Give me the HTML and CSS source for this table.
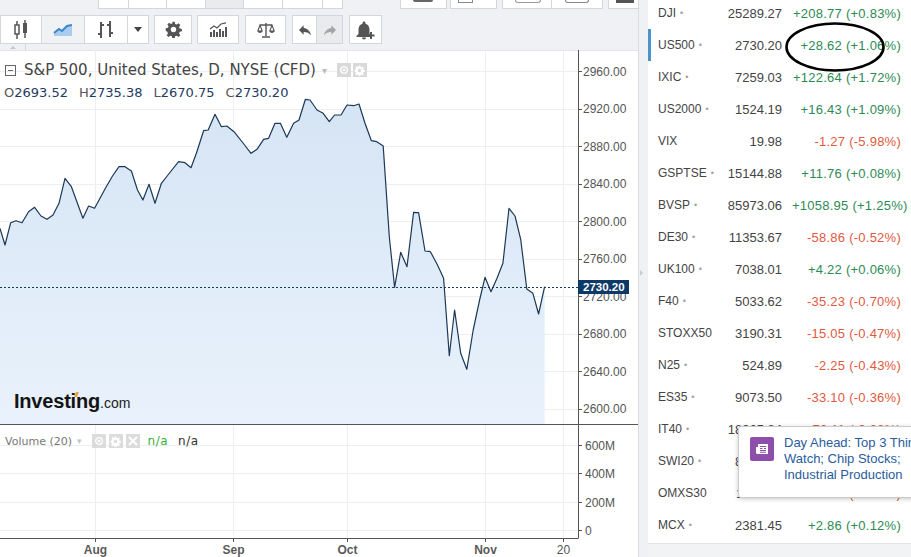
FILE: index.html
```html
<!DOCTYPE html>
<html>
<head>
<meta charset="utf-8">
<title>S&amp;P 500 chart</title>
<link rel="stylesheet" href="styles.css">
</head>
<body>
<div class="app">
  <div class="main">
    <div class="topbar">
      <span class="tb first" style="width:31px"></span>
      <span class="tb" style="width:38px"></span>
      <span class="tb" style="width:39px"></span>
      <span class="tb grey" style="width:38px"></span>
      <span class="tb" style="width:39px"></span>
      <span class="tb" style="width:40px"></span>
      <span class="tb" style="width:20px"></span>
      <span class="tgap" style="width:57px"></span>
      <span class="tb first" style="width:47px"><i class="peek p1"></i></span>
      <span class="tgap" style="width:3px"></span>
      <span class="tb first" style="width:47px"><i class="peek p2"></i></span>
      <span class="tgap" style="width:5px"></span>
      <span class="tb first" style="width:50px"><i class="peek p3"></i></span>
      <span class="tb" style="width:51px"><i class="peek p4"></i></span>
      <span class="tgap" style="width:5px"></span>
      <span class="tb first" style="width:32px"><i class="peek p5"></i></span>
    </div>
    <div class="toolbar">
      <div class="group">
        <span class="btn w42">
          <svg width="14" height="20" viewBox="0 0 14 20"><path d="M3 1v18M11 0v18" stroke="#555" stroke-width="1.5"/><rect x="1" y="5" width="4" height="9" fill="#fff" stroke="#555" stroke-width="1.5"/><rect x="9" y="3" width="4" height="10" fill="#555"/></svg>
        </span>
        <span class="btn w43 sel">
          <svg width="20" height="14" viewBox="0 0 20 14"><path d="M1 10 L6 6 L9 8 L14 3 L19 2 V13 H1Z" fill="#a9cdee"/><path d="M1 10 L6 6 L9 8 L14 3 L19 2" fill="none" stroke="#3b86cc" stroke-width="2"/></svg>
        </span>
        <span class="btn w43">
          <svg width="18" height="20" viewBox="0 0 18 20"><path d="M4 2v16M1 14h3M4 5h3M13 1v16M10 5h3M13 13h3" stroke="#555" stroke-width="2" fill="none"/></svg>
        </span>
        <span class="btn w21">
          <svg width="8" height="5" viewBox="0 0 8 5"><path d="M0 0h8L4 5Z" fill="#444"/></svg>
        </span>
      </div>
      <div class="group">
        <span class="btn w38">
          <svg width="17" height="17" viewBox="0 0 24 24"><path fill="#555" fill-rule="evenodd" d="M10.3 1h3.4l.6 3.1 2.3 1 2.6-1.8 2.4 2.4-1.8 2.6 1 2.3 3.1.6v3.4l-3.1.6-1 2.3 1.8 2.6-2.4 2.4-2.6-1.8-2.3 1-.6 3.1h-3.4l-.6-3.1-2.3-1-2.6 1.8-2.4-2.4 1.8-2.6-1-2.3L1 13.7v-3.4l3.1-.6 1-2.3-1.8-2.6 2.4-2.4 2.6 1.8 2.3-1zM12 8.2a3.8 3.8 0 1 0 0 7.6 3.8 3.8 0 0 0 0-7.6z"/></svg>
        </span>
      </div>
      <div class="group">
        <span class="btn w42">
          <svg width="18" height="15" viewBox="0 0 18 15"><path d="M1 7 L5 4 L8 6 L12 2 L17 0.8" fill="none" stroke="#555" stroke-width="1.2"/><path d="M2 10v5M5 8v7M8 10v5M11 7v8M14 9v6M17 5v10" stroke="#555" stroke-width="2"/></svg>
        </span>
      </div>
      <div class="group">
        <span class="btn w41">
          <svg width="18" height="16" viewBox="0 0 18 16"><path d="M9 1v13M3 3h12M5 15h8" stroke="#555" stroke-width="1.4"/><path d="M3 3 L0.8 9 H5.2Z M15 3 L12.8 9 H17.2Z" fill="none" stroke="#555" stroke-width="1.1"/><path d="M0.8 9 a2.2 2 0 0 0 4.4 0Z M12.8 9 a2.2 2 0 0 0 4.4 0Z" fill="#555"/></svg>
        </span>
      </div>
      <div class="group">
        <span class="btn w25">
          <svg width="16" height="16" viewBox="0 0 24 24"><path fill="#555" d="M10 9V5l-7 7 7 7v-4.1c5 0 8.5 1.6 11 5.1-1-5-4-10-11-11z"/></svg>
        </span>
        <span class="btn w26 grey">
          <svg width="16" height="16" viewBox="0 0 24 24"><path fill="#a3a5a8" d="M14 9V5l7 7-7 7v-4.1c-5 0-8.5 1.6-11 5.1 1-5 4-10 11-11z"/></svg>
        </span>
      </div>
      <div class="group">
        <span class="btn w33">
          <svg width="19" height="20" viewBox="0 0 19 20"><path fill="#555" d="M8 19.5c1.1 0 2-.9 2-2H6c0 1.1.9 2 2 2zm5.5-5.5v-4.5c0-2.8-1.5-5.1-4-5.8V3c0-.8-.7-1.5-1.5-1.5S6.5 2.2 6.5 3v.7C4 4.4 2.5 6.7 2.5 9.5V14l-2 2v1h15v-1z"/><path d="M15 12v7M11.5 15.5h7" stroke="#555" stroke-width="2"/></svg>
        </span>
      </div>
    </div>
    <div class="strip"><span class="up-arrow"></span><span class="strip-line"></span></div>
    <div class="chart">
      <svg class="plot" width="638" height="507" viewBox="0 50 638 507">
        <defs>
          <linearGradient id="fillg" x1="0" y1="95" x2="0" y2="424" gradientUnits="userSpaceOnUse">
            <stop offset="0" stop-color="#d5e4f4"/>
            <stop offset="1" stop-color="#e9f2fc"/>
          </linearGradient>
        </defs>
        <g stroke="#eceef1" stroke-width="1">
          <path d="M0 71.5H578M0 109.5H578M0 146.5H578M0 184.5H578M0 221.5H578M0 259.5H578M0 296.5H578M0 334.5H578M0 371.5H578M0 409.5H578"/>
          <path d="M0 445.5H578M0 473.5H578M0 502.5H578M0 530.5H578"/>
          <path d="M95.5 50V538M233.5 50V538M347.5 50V538M485.5 50V538M563.5 50V538"/>
        </g>
        <polygon fill="url(#fillg)" points="0,228.3 5,245 10.7,222.7 16,220.7 22,222.7 28.6,211.7 34.6,207.3 41,216 47,219.3 53,215 59,203.3 65,178.3 71.4,186.7 82.9,218.3 88.6,206 94.6,208.3 105.4,188.3 112.5,176 119,166.7 125,166.7 131.4,171 137.5,190 142.9,200 149,184.3 155,203.3 161.4,183.3 167.9,175 178.6,161.7 185,162.7 191,167.7 196.4,153.3 203.6,130.7 208.2,130 215,114.3 221.4,126.7 226.8,126 234,131.7 244.6,145 251,153.3 257,149.3 263.6,139.3 268.6,138.3 275,123.3 280.4,123.3 286.8,137.3 293.6,123.3 299,120 305.4,99.3 310,100 317,110 323.2,113.3 329.3,121.7 334.6,115 341,115 347,105 353.6,105.7 359,104 365,123.3 371.4,140.7 376.8,141.7 383.2,146 389.3,236.7 394.6,287.3 400.7,252.3 407,266.7 413.6,212.3 418.6,212.7 425,251 430.4,251.7 437.5,265 443.6,278.3 449.3,355.7 454.6,310 460.7,353.3 466.8,369.3 473.2,330 479.6,300 485,277.3 491,291.7 497,278.3 502.9,263.3 509,208.3 515,216 520.7,239.3 526.8,289 532.9,293.3 538.6,314 544.6,286.7 544.6,424 0,424"/>
        <polyline fill="none" stroke="#1c3857" stroke-width="1.2" stroke-linejoin="round" points="0,228.3 5,245 10.7,222.7 16,220.7 22,222.7 28.6,211.7 34.6,207.3 41,216 47,219.3 53,215 59,203.3 65,178.3 71.4,186.7 82.9,218.3 88.6,206 94.6,208.3 105.4,188.3 112.5,176 119,166.7 125,166.7 131.4,171 137.5,190 142.9,200 149,184.3 155,203.3 161.4,183.3 167.9,175 178.6,161.7 185,162.7 191,167.7 196.4,153.3 203.6,130.7 208.2,130 215,114.3 221.4,126.7 226.8,126 234,131.7 244.6,145 251,153.3 257,149.3 263.6,139.3 268.6,138.3 275,123.3 280.4,123.3 286.8,137.3 293.6,123.3 299,120 305.4,99.3 310,100 317,110 323.2,113.3 329.3,121.7 334.6,115 341,115 347,105 353.6,105.7 359,104 365,123.3 371.4,140.7 376.8,141.7 383.2,146 389.3,236.7 394.6,287.3 400.7,252.3 407,266.7 413.6,212.3 418.6,212.7 425,251 430.4,251.7 437.5,265 443.6,278.3 449.3,355.7 454.6,310 460.7,353.3 466.8,369.3 473.2,330 479.6,300 485,277.3 491,291.7 497,278.3 502.9,263.3 509,208.3 515,216 520.7,239.3 526.8,289 532.9,293.3 538.6,314 544.6,286.7"/>
        <path d="M0 287.5H578" stroke="#1c3857" stroke-width="1" stroke-dasharray="2 2"/>
        <g stroke="#555" stroke-width="1" fill="none">
          <path d="M578.5 50V538M0 424.5H638M0 538.5H578.5"/>
          <path d="M578 71.5h4M578 109.5h4M578 146.5h4M578 184.5h4M578 221.5h4M578 259.5h4M578 296.5h4M578 334.5h4M578 371.5h4M578 409.5h4"/>
          <path d="M578 445.5h4M578 473.5h4M578 502.5h4M578 530.5h4"/>
          <path d="M95.5 538v4M233.5 538v4M347.5 538v4M485.5 538v4M563.5 538v4"/>
        </g>
        <g class="ax">
          <text x="583" y="71.7">2960.00</text>
          <text x="583" y="109.2">2920.00</text>
          <text x="583" y="146.7">2880.00</text>
          <text x="583" y="184.2">2840.00</text>
          <text x="583" y="221.7">2800.00</text>
          <text x="583" y="259.2">2760.00</text>
          <text x="583" y="296.7">2720.00</text>
          <text x="583" y="334.2">2680.00</text>
          <text x="583" y="371.7">2640.00</text>
          <text x="583" y="409.2">2600.00</text>
          <text x="585" y="445.7">600M</text>
          <text x="585" y="474">400M</text>
          <text x="585" y="502.7">200M</text>
          <text x="585" y="531">0</text>
        </g>
        <g class="ax mid">
          <text class="b" x="95.5" y="549.5">Aug</text>
          <text class="b" x="233.5" y="549.5">Sep</text>
          <text class="b" x="347.5" y="549.5">Oct</text>
          <text class="b" x="485.5" y="549.5">Nov</text>
          <text x="563.5" y="549.5">20</text>
        </g>
        <rect x="578" y="280" width="51" height="14" fill="#0c3966"/>
        <text class="lastp" x="583" y="287.3">2730.20</text>
      </svg>

      <div class="head">
        <div class="title-row">
          <span class="collapse"></span>
          <span class="title">S&amp;P 500, United States, D, NYSE (CFD)</span>
          <span class="caret">▾</span>
          <span class="ibox first"><svg width="10" height="10" viewBox="0 0 10 10"><circle cx="5" cy="5" r="3.3" fill="none" stroke="#fff" stroke-width="1.3"/><circle cx="5" cy="5" r="1.3" fill="#fff"/></svg></span>
          <span class="ibox"><svg width="11" height="11" viewBox="0 0 24 24"><path fill="#fff" fill-rule="evenodd" d="M10.3 1h3.4l.6 3.1 2.3 1 2.6-1.8 2.4 2.4-1.8 2.6 1 2.3 3.1.6v3.4l-3.1.6-1 2.3 1.8 2.6-2.4 2.4-2.6-1.8-2.3 1-.6 3.1h-3.4l-.6-3.1-2.3-1-2.6 1.8-2.4-2.4 1.8-2.6-1-2.3L1 13.7v-3.4l3.1-.6 1-2.3-1.8-2.6 2.4-2.4 2.6 1.8 2.3-1zM12 8.2a3.8 3.8 0 1 0 0 7.6 3.8 3.8 0 0 0 0-7.6z"/></svg></span>
        </div>
        <div class="ohlc">
          <span class="q"><b>O</b>2693.52</span>
          <span class="q"><b>H</b>2735.38</span>
          <span class="q"><b>L</b>2670.75</span>
          <span class="q"><b>C</b>2730.20</span>
        </div>
      </div>

      <div class="logo">Investing<span class="com">.com</span><i class="spark"></i></div>

      <div class="vol-head">
        <span class="vname">Volume (20)</span>
        <span class="vcaret">▾</span>
        <span class="ibox light first"><svg width="10" height="10" viewBox="0 0 10 10"><circle cx="5" cy="5" r="3.3" fill="none" stroke="#fff" stroke-width="1.3"/><circle cx="5" cy="5" r="1.3" fill="#fff"/></svg></span>
        <span class="ibox light"><svg width="11" height="11" viewBox="0 0 24 24"><path fill="#fff" fill-rule="evenodd" d="M10.3 1h3.4l.6 3.1 2.3 1 2.6-1.8 2.4 2.4-1.8 2.6 1 2.3 3.1.6v3.4l-3.1.6-1 2.3 1.8 2.6-2.4 2.4-2.6-1.8-2.3 1-.6 3.1h-3.4l-.6-3.1-2.3-1-2.6 1.8-2.4-2.4 1.8-2.6-1-2.3L1 13.7v-3.4l3.1-.6 1-2.3-1.8-2.6 2.4-2.4 2.6 1.8 2.3-1zM12 8.2a3.8 3.8 0 1 0 0 7.6 3.8 3.8 0 0 0 0-7.6z"/></svg></span>
        <span class="ibox light"><svg width="10" height="10" viewBox="0 0 10 10"><path d="M1 1L9 9M9 1L1 9" stroke="#fff" stroke-width="1.8"/></svg></span>
        <span class="na green">n/a</span>
        <span class="na">n/a</span>
      </div>
    </div>
  </div>

  <div class="divider"><span class="handle"></span></div>

  <div class="panel">
    <div class="list">
      <div class="row"><span class="nm">DJI<i class="dot">•</i></span><span class="pr">25289.27</span><span class="ch up">+208.77 (+0.83%)</span></div>
      <div class="row active"><span class="nm">US500<i class="dot">•</i></span><span class="pr">2730.20</span><span class="ch up">+28.62 (+1.06%)</span></div>
      <div class="row"><span class="nm">IXIC<i class="dot">•</i></span><span class="pr">7259.03</span><span class="ch up">+122.64 (+1.72%)</span></div>
      <div class="row"><span class="nm">US2000<i class="dot">•</i></span><span class="pr">1524.19</span><span class="ch up">+16.43 (+1.09%)</span></div>
      <div class="row"><span class="nm">VIX</span><span class="pr">19.98</span><span class="ch down">-1.27 (-5.98%)</span></div>
      <div class="row"><span class="nm">GSPTSE<i class="dot">•</i></span><span class="pr">15144.88</span><span class="ch up">+11.76 (+0.08%)</span></div>
      <div class="row"><span class="nm">BVSP<i class="dot">•</i></span><span class="pr">85973.06</span><span class="ch up">+1058.95 (+1.25%)</span></div>
      <div class="row"><span class="nm">DE30<i class="dot">•</i></span><span class="pr">11353.67</span><span class="ch down">-58.86 (-0.52%)</span></div>
      <div class="row"><span class="nm">UK100<i class="dot">•</i></span><span class="pr">7038.01</span><span class="ch up">+4.22 (+0.06%)</span></div>
      <div class="row"><span class="nm">F40<i class="dot">•</i></span><span class="pr">5033.62</span><span class="ch down">-35.23 (-0.70%)</span></div>
      <div class="row"><span class="nm">STOXX50</span><span class="pr">3190.31</span><span class="ch down">-15.05 (-0.47%)</span></div>
      <div class="row"><span class="nm">N25<i class="dot">•</i></span><span class="pr">524.89</span><span class="ch down">-2.25 (-0.43%)</span></div>
      <div class="row"><span class="nm">ES35<i class="dot">•</i></span><span class="pr">9073.50</span><span class="ch down">-33.10 (-0.36%)</span></div>
      <div class="row"><span class="nm">IT40<i class="dot">•</i></span><span class="pr">18965.84</span><span class="ch down">-73.11 (-0.38%)</span></div>
      <div class="row"><span class="nm">SWI20<i class="dot">•</i></span><span class="pr">8851.42</span><span class="ch down">-18.32 (-0.21%)</span></div>
      <div class="row"><span class="nm">OMXS30</span><span class="pr">1511.09</span><span class="ch down">-2.74 (-0.18%)</span></div>
      <div class="row"><span class="nm">MCX<i class="dot">•</i></span><span class="pr">2381.45</span><span class="ch up">+2.86 (+0.12%)</span></div>
    </div>
    <div class="panel-foot"></div>
  </div>
</div>

<div class="popup">
  <span class="news-ico"><svg width="24" height="24" viewBox="0 0 24 24"><rect width="24" height="24" rx="2" fill="#8e4fab"/><path d="M8 7h10v10H7.5A1.5 1.5 0 0 1 6 15.5V10h2z" fill="#fff"/><path d="M10 9.5h6M10 11.5h2.5M14 11.5h2M10 13.5h6M10 15.2h6" stroke="#8e4fab" stroke-width="1.1"/></svg></span>
  <span class="ptext">Day Ahead: Top 3 Things to<br>Watch; Chip Stocks;<br>Industrial Production</span>
</div>

<svg class="ellipse" width="102" height="52" viewBox="0 0 102 52"><ellipse cx="51" cy="26" rx="48.5" ry="23.5" fill="none" stroke="#000" stroke-width="2.6"/></svg>
</body>
</html>
```

FILE: styles.css
```css
* { box-sizing: border-box; margin: 0; padding: 0; }
html, body { width: 911px; height: 557px; overflow: hidden; }
body {
  background: #eff1f4;
  font-family: "Liberation Sans", Arial, sans-serif;
  color: #444;
  position: relative;
}
.app { display: flex; height: 557px; }
.main { width: 638px; flex: none; display: flex; flex-direction: column; }

/* cut-off top toolbar row */
.topbar { display: flex; height: 9px; padding-left: 98px; }
.tb {
  height: 9px; flex: none; background: #fff;
  border-right: 1px solid #d3d6da; border-bottom: 1px solid #d3d6da;
  position: relative; overflow: hidden;
}
.tb.first { border-left: 1px solid #d3d6da; }
.tb.grey { background: #eaebed; }
.tgap { flex: none; }
.peek { position: absolute; display: block; background: #666; }
.peek.p1 { left: 12px; top: 0; width: 20px; height: 2px; border-radius: 0 0 3px 3px; }
.peek.p2 { left: 7px; top: 0; width: 15px; height: 3px; background: none; border: 1px solid #888; border-top: none; }
.peek.p3 { left: 12px; top: 0; width: 26px; height: 3px; background: none; border: 1px solid #999; border-top: none; border-radius: 0 0 8px 8px; }
.peek.p4 { left: 13px; top: 0; width: 24px; height: 3px; background: none; border: 1px solid #888; border-top: none; border-radius: 0 0 4px 4px; }
.peek.p5 { left: 7px; top: 0; width: 18px; height: 3px; background: #555; }

/* main toolbar */
.toolbar { display: flex; gap: 5px; height: 29px; margin-top: 6px; }
.group { display: flex; }
.group:nth-child(4), .group:nth-child(5), .group:nth-child(6) { margin-left: 1px; }
.btn {
  height: 29px; flex: none; background: #fff;
  border: 1px solid #d3d6da; border-left: none;
  display: flex; align-items: center; justify-content: center;
}
.group .btn:first-child { border-left: 1px solid #d3d6da; }
.btn.sel { background: #f1f2f4; }
.btn.grey { background: #eaebed; }
.w21 { width: 21px; } .w25 { width: 25px; } .w26 { width: 26px; } .w33 { width: 33px; }
.w38 { width: 38px; } .w41 { width: 41px; } .w42 { width: 42px; } .w43 { width: 43px; }

.strip { height: 6px; position: relative; }
.up-arrow {
  position: absolute; left: 10px; top: 2px; width: 0; height: 0;
  border-left: 3px solid transparent; border-right: 3px solid transparent;
  border-bottom: 3px solid #c3c6ca;
}
.strip-line { position: absolute; left: 25px; top: 0; width: 1px; height: 6px; background: #d3d6da; }

/* chart */
.chart { height: 507px; background: #fff; position: relative; border-top: 1px solid #e3e5e8; }
.plot { display: block; position: absolute; left: 0; top: -1px; }
.ax text { font-family: "Liberation Sans", Arial, sans-serif; font-size: 12px; fill: #555; dominant-baseline: central; }
.ax.mid text { text-anchor: middle; }
.ax text.b { font-weight: 700; fill: #5a5a5a; }
.lastp { font-family: "Liberation Sans", Arial, sans-serif; font-size: 11.5px; font-weight: 700; fill: #fff; dominant-baseline: central; }

.head { position: absolute; left: 4px; top: 9px; font-family: "DejaVu Sans", Verdana, sans-serif; }
.title-row { display: flex; align-items: center; height: 20px; }
.collapse {
  width: 11px; height: 11px; border: 1px solid #666; position: relative; margin-left: 1px; flex: none;
}
.collapse::after { content: ""; position: absolute; left: 2px; right: 2px; top: 4px; height: 1px; background: #666; }
.title { font-size: 15px; color: #444; margin-left: 8px; white-space: nowrap; }
.caret { font-size: 10px; color: #bbb; margin-left: 6px; }
.ibox {
  width: 14px; height: 14px; background: #d9d9d9; display: inline-flex;
  align-items: center; justify-content: center; flex: none; margin-left: 2px;
}
.ibox.first { margin-left: 10px; }
.ohlc { display: flex; height: 23px; align-items: center; font-size: 13px; margin-top: 1px; }
.q { color: #1e3b63; margin-right: 11px; white-space: nowrap; }
.q b { font-weight: 400; color: #555; }

.logo {
  position: absolute; left: 14px; top: 340px;
  font-family: "Liberation Sans", Arial, sans-serif; font-weight: 700;
  font-size: 20px; line-height: 20px; color: #141414; letter-spacing: -0.2px;
}
.logo .com { font-weight: 400; font-size: 14px; letter-spacing: 0; color: #222; }
.logo .spark {
  position: absolute; left: 61px; top: 1px; width: 3px; height: 5px;
  background: #f0a230; transform: skewX(-20deg);
}

.vol-head {
  position: absolute; left: 5px; top: 382px; height: 16px;
  display: flex; align-items: center;
  font-family: "DejaVu Sans", Verdana, sans-serif; font-size: 11px;
}
.vname { color: #777; }
.vcaret { color: #c5c5c5; font-size: 9px; margin-left: 5px; }
.ibox.light { background: #dcdcdc; margin-left: 3px; }
.ibox.light.first { margin-left: 10px; }
.na { font-size: 12px; color: #333; margin-left: 10px; letter-spacing: 0.5px; }
.na.green { color: #35b23a; margin-left: 8px; }

/* divider */
.divider {
  width: 10px; flex: none; position: relative;
  border-left: 1px solid #d9dcdf; background: #eff1f4;
}
.handle {
  position: absolute; left: 1px; top: 270px; width: 0; height: 0;
  border-top: 3px solid transparent; border-bottom: 3px solid transparent;
  border-left: 3px solid #c8cbcf;
}

/* right panel */
.panel { flex: 1; display: flex; flex-direction: column; overflow: hidden; }
.list { background: #fff; margin-top: -3px; padding-bottom: 2px; }
.row {
  display: grid; grid-template-columns: 66px 58px 119px;
  height: 32px; align-items: center; padding-left: 10px; position: relative;
  font-size: 13px; white-space: nowrap;
}
.row.active::before {
  content: ""; position: absolute; left: 0; top: 0; width: 3px; height: 32px; background: #4a93cd;
}
.nm { font-size: 12px; color: #444; }
.dot { font-style: normal; font-size: 9px; color: #a0a0a0; margin-left: 4px; position: relative; top: -1px; }
.pr { text-align: right; color: #444; }
.ch { text-align: right; padding-left: 10px; letter-spacing: 0.25px; }
.up { color: #2e8a55; }
.down { color: #df5a42; }
.panel-foot { flex: 1; border-top: 1px solid #e2e4e7; background: #f2f3f5; }

/* overlays */
.popup {
  position: absolute; left: 738px; top: 426px; width: 240px; height: 72px;
  background: #fff; border: 1px solid #c9cbce; border-radius: 3px;
  box-shadow: 0 1px 4px rgba(0, 0, 0, 0.22);
  display: flex; align-items: flex-start; padding: 10px 0 0 11px;
}
.news-ico { width: 24px; height: 24px; flex: none; display: block; }
.news-ico svg { display: block; }
.ptext {
  margin-left: 10px; margin-top: -2px; font-size: 13px; line-height: 16px;
  color: #2a5c9c; white-space: nowrap;
}
.ellipse { position: absolute; left: 784px; top: 21px; }
```
